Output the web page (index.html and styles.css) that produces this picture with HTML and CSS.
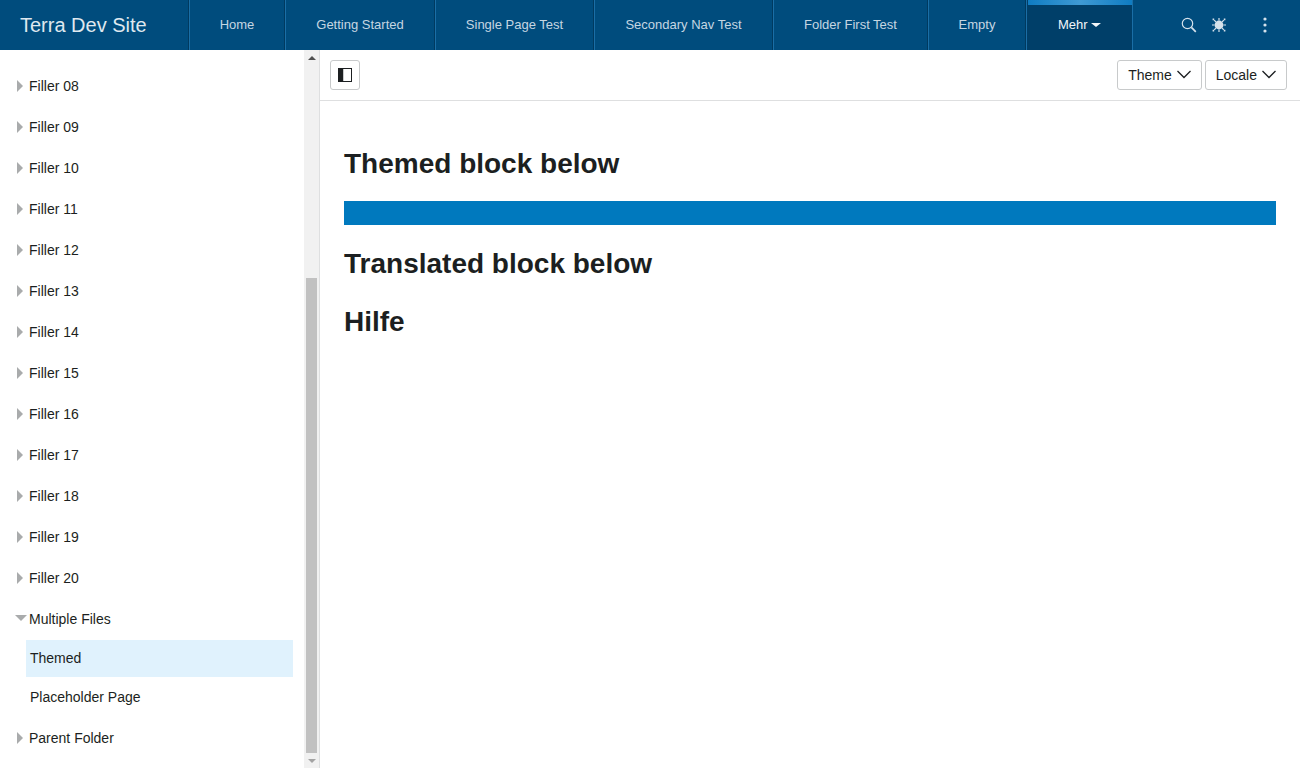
FILE: index.html
```html
<!DOCTYPE html>
<html>
  <head>
    <title>Terra Dev Site</title>
    <link rel="stylesheet" href="styles.css">
  </head>

  <body>
    <div class="header">
      <div class="brand">Terra Dev Site</div>
      <div class="nav">
        <a class="nav-item">Home</a>
        <a class="nav-item">Getting Started</a>
        <a class="nav-item">Single Page Test</a>
        <a class="nav-item">Secondary Nav Test</a>
        <a class="nav-item">Folder First Test</a>
        <a class="nav-item">Empty</a>
        <a class="nav-item nav-active">Mehr <span class="nav-caret"></span></a>
      </div>
      <div class="header-icons">
        <svg class="icon-search" width="16" height="16" viewBox="0 0 16 16">
          <circle cx="6.5" cy="6.5" r="5.2" fill="none" stroke="#d5e2ec" stroke-width="1.2" />
          <path d="M10.4 10.4 L14.8 14.8" stroke="#d5e2ec" stroke-width="1.7" />
        </svg>
        <svg class="icon-sun" width="16" height="16" viewBox="0 0 16 16">
          <circle cx="8" cy="8" r="4.4" fill="#d5e2ec" />
          <path d="M8 1 V3.5 M8 12.5 V15 M1 8 H3.5 M12.5 8 H15 M3.2 3.2 L5 5 M11 11 L12.8 12.8 M3.2 12.8 L5 11 M11 5 L12.8 3.2" stroke="#d5e2ec" stroke-width="1.2" />
          <path d="M1.6 1.6 h1.6 v1.6 h-1.6 z M12.8 1.6 h1.6 v1.6 h-1.6 z M1.6 12.8 h1.6 v1.6 h-1.6 z M12.8 12.8 h1.6 v1.6 h-1.6 z" fill="#d5e2ec" />
        </svg>
        <svg class="icon-more" width="6" height="16" viewBox="0 0 6 16">
          <circle cx="3" cy="2" r="1.6" fill="#d5e2ec" />
          <circle cx="3" cy="8" r="1.6" fill="#d5e2ec" />
          <circle cx="3" cy="14" r="1.6" fill="#d5e2ec" />
        </svg>
      </div>
    </div>

    <div class="main">
      <div class="sidebar">
        <div class="tree">
          <div class="tree-row"><span class="arrow"></span>Filler 08</div>
          <div class="tree-row"><span class="arrow"></span>Filler 09</div>
          <div class="tree-row"><span class="arrow"></span>Filler 10</div>
          <div class="tree-row"><span class="arrow"></span>Filler 11</div>
          <div class="tree-row"><span class="arrow"></span>Filler 12</div>
          <div class="tree-row"><span class="arrow"></span>Filler 13</div>
          <div class="tree-row"><span class="arrow"></span>Filler 14</div>
          <div class="tree-row"><span class="arrow"></span>Filler 15</div>
          <div class="tree-row"><span class="arrow"></span>Filler 16</div>
          <div class="tree-row"><span class="arrow"></span>Filler 17</div>
          <div class="tree-row"><span class="arrow"></span>Filler 18</div>
          <div class="tree-row"><span class="arrow"></span>Filler 19</div>
          <div class="tree-row"><span class="arrow"></span>Filler 20</div>
          <div class="tree-row"><span class="arrow-open"></span>Multiple Files</div>
          <div class="tree-children">
            <div class="tree-child tree-child-active">Themed</div>
            <div class="tree-child">Placeholder Page</div>
          </div>
          <div class="tree-row"><span class="arrow"></span>Parent Folder</div>
        </div>
        <div class="scrollbar">
          <div class="scroll-btn"><span class="scroll-up"></span></div>
          <div class="scroll-thumb"></div>
          <div class="scroll-btn"><span class="scroll-down"></span></div>
        </div>
      </div>

      <div class="content">
        <div class="toolbar">
          <button class="btn btn-toggle" type="button"><span class="toggle-icon"></span></button>
          <div class="toolbar-right">
            <button class="btn" type="button">Theme
              <svg width="14" height="9" viewBox="0 0 14 9"><path d="M.5 1 L7 7.5 L13.5 1" fill="none" stroke="#1c1f21" stroke-width="1.3" /></svg>
            </button>
            <button class="btn" type="button">Locale
              <svg width="14" height="9" viewBox="0 0 14 9"><path d="M.5 1 L7 7.5 L13.5 1" fill="none" stroke="#1c1f21" stroke-width="1.3" /></svg>
            </button>
          </div>
        </div>
        <div class="page">
          <h2 class="heading-first">Themed block below</h2>
          <div class="themed-block"></div>
          <h2>Translated block below</h2>
          <h2>Hilfe</h2>
        </div>
      </div>
    </div>
  </body>
</html>
```

FILE: styles.css
```css
html, body {
  margin: 0;
  height: 100%;
  overflow: hidden;
}

body {
  background-color: #ffffff;
  color: #1c1f21;
  font-family: "Liberation Sans", Arial, sans-serif;
  font-size: 14px;
}

/* header */

.header {
  display: flex;
  height: 50px;
  background-color: #004c7d;
}

.brand {
  width: 189px;
  padding-left: 20px;
  box-sizing: border-box;
  box-shadow: inset -1px 0 0 #003a60;
  font-size: 20px;
  line-height: 50px;
  color: #dfe8ef;
}

.nav {
  display: grid;
  grid-template-columns: 96px 150px 159px 179px 155px 98px 106px;
  border-left: 1px solid #1a6ea6;
}

.nav-item {
  box-sizing: border-box;
  padding-right: 1px;
  border-right: 1px solid #1a6ea6;
  box-shadow: inset -1px 0 0 #003a60;
  font-size: 13px;
  line-height: 49px;
  text-align: center;
  color: #c5d6e2;
  white-space: nowrap;
}

.nav-active {
  position: relative;
  padding-right: 0;
  background-color: #003f69;
  box-shadow: none;
  color: #f2f6f9;
}

.nav-active::before {
  content: "";
  position: absolute;
  top: 0;
  left: 1px;
  right: 0;
  height: 5px;
  background: linear-gradient(to right, #0f7cc2, #3f9ad4 50%, #0f7cc2);
}

.nav-caret {
  display: inline-block;
  vertical-align: 2px;
  border-top: 4px solid #f2f6f9;
  border-left: 5px solid transparent;
  border-right: 5px solid transparent;
}

.header-icons {
  display: flex;
  align-items: center;
  margin-left: 48px;
}

.icon-sun {
  margin-left: 14px;
}

.icon-more {
  margin-left: 35px;
}

/* sidebar */

.main {
  display: flex;
  height: 718px;
}

.sidebar {
  display: flex;
  flex: none;
  width: 320px;
  box-sizing: border-box;
  border-right: 1px solid #dedfe0;
}

.tree {
  flex: 1;
  padding-top: 16px;
  overflow: hidden;
}

.tree-row {
  display: flex;
  align-items: center;
  height: 41px;
  box-sizing: border-box;
  padding: 0 0 2px 29px;
  position: relative;
}

.arrow {
  position: absolute;
  left: 17px;
  top: 14px;
  border-left: 6px solid #a9abac;
  border-top: 6px solid transparent;
  border-bottom: 6px solid transparent;
}

.arrow-open {
  position: absolute;
  left: 15px;
  top: 16px;
  border-top: 6px solid #a9abac;
  border-left: 6px solid transparent;
  border-right: 6px solid transparent;
}

.tree-children {
  padding: 0 11px 2px 26px;
}

.tree-child {
  height: 37px;
  padding-left: 4px;
  margin-bottom: 2px;
  line-height: 37px;
}

.tree-child:last-child {
  margin-bottom: 0;
}

.tree-child-active {
  background-color: #e0f2fd;
}

/* scrollbar */

.scrollbar {
  display: flex;
  flex-direction: column;
  flex: none;
  width: 15px;
  background-color: #f1f1f1;
}

.scroll-btn {
  display: flex;
  align-items: center;
  justify-content: center;
  height: 15px;
}

.scroll-thumb {
  height: 475px;
  margin: 213px 2px 0;
  background-color: #c1c1c1;
}

.scroll-up {
  border-bottom: 4px solid #505050;
  border-left: 4px solid transparent;
  border-right: 4px solid transparent;
}

.scroll-down {
  border-top: 4px solid #a3a3a3;
  border-left: 4px solid transparent;
  border-right: 4px solid transparent;
}

/* content */

.content {
  flex: 1;
}

.toolbar {
  display: flex;
  align-items: center;
  justify-content: space-between;
  height: 51px;
  box-sizing: border-box;
  padding: 0 13px 1px 10px;
  border-bottom: 1px solid #dedfe0;
}

.toolbar-right {
  display: flex;
  gap: 3px;
}

.btn {
  display: flex;
  align-items: center;
  gap: 5px;
  height: 30px;
  padding: 0 10px;
  background-color: #ffffff;
  border: 1px solid #c8cacb;
  border-radius: 3px;
  color: #1c1f21;
  font-family: inherit;
  font-size: 14px;
}

.btn-toggle {
  justify-content: center;
  width: 30px;
  padding: 0;
}

.toggle-icon {
  width: 14px;
  height: 14px;
  box-sizing: border-box;
  border: 1px solid #1c1f21;
  background: linear-gradient(to right, #1c1f21 4px, #c9cbcc 4px, #c9cbcc 5px, #ffffff 5px);
}

.page {
  padding: 0 24px;
}

h2 {
  margin: 0 0 24px;
  font-size: 28px;
  line-height: 34px;
  font-weight: bold;
  color: #1c1f21;
}

.heading-first {
  margin: 46px 0 20px;
}

.themed-block {
  height: 24px;
  margin-bottom: 22px;
  background-color: #0079be;
}
```
